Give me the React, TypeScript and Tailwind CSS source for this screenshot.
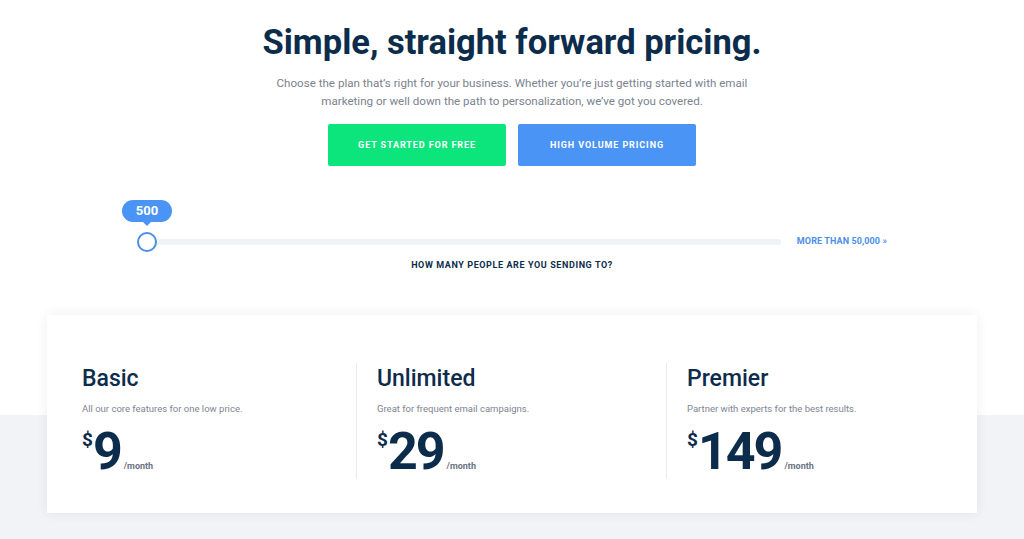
const plans = [
  { name: 'Basic', desc: 'All our core features for one low price.', price: '9' },
  { name: 'Unlimited', desc: 'Great for frequent email campaigns.', price: '29' },
  { name: 'Premier', desc: 'Partner with experts for the best results.', price: '149' },
];

const PlanColumn = ({ name, desc, price }: { name: string; desc: string; price: string }) => (
  <div className="flex h-full flex-col">
    <h3 className="mt-[4px] text-[23px] font-medium leading-none text-[#0c2c4c]">{name}</h3>
    <p className="mt-[13px] text-[9.5px] leading-[12px] text-[#7e8591]">{desc}</p>
    <div className="mt-[11px] flex items-baseline text-[#0c2c4c]">
      <span className="self-start pt-[4px] text-[19px] font-bold leading-none">$</span>
      <span className="text-[52px] font-bold leading-none tracking-[-2px]">{price}</span>
      <span className="ml-[3px] text-[9px] font-bold text-[#6b7380]">/month</span>
    </div>
  </div>
);

export default function App() {
  return (
    <div className="min-h-[539px] bg-white font-['Roboto',sans-serif]">
      <section className="flex flex-col items-center pt-[25px]">
        <h1 className="text-[34.5px] font-bold leading-none text-[#0c2c4c]">
          Simple, straight forward pricing.
        </h1>
        <p className="mt-[14px] w-[480px] text-center text-[11.6px] leading-[18px] text-[#7b828e]">
          Choose the plan that’s right for your business. Whether you’re just getting started with
          email marketing or well down the path to personalization, we’ve got you covered.
        </p>
        <div className="mt-[14px] flex gap-3">
          <button className="h-[42px] w-[178px] rounded-[2px] bg-[#0ce57c] pt-[2px] text-[9px] font-bold tracking-[0.9px] text-white">
            GET STARTED FOR FREE
          </button>
          <button className="h-[42px] w-[178px] rounded-[2px] bg-[#4a94f5] pt-[2px] text-[9px] font-bold tracking-[0.9px] text-white">
            HIGH VOLUME PRICING
          </button>
        </div>

        <div className="mt-[66px] flex w-[750px] items-center gap-4">
          <div className="relative flex h-[20px] flex-1 items-center">
            <div className="h-[6px] w-full rounded-full bg-[#f0f2f5]" />
            <div className="absolute left-0 top-0 h-[20px] w-[20px] rounded-full border-2 border-[#4a8ee6] bg-white">
              <div className="absolute bottom-[28px] left-1/2 flex h-[22px] w-[50px] -translate-x-1/2 items-center justify-center rounded-full bg-[#4a94f5] text-[13px] font-bold text-white">
                500
                <span className="absolute left-1/2 top-full h-0 w-0 -translate-x-1/2 border-x-[4px] border-t-[4px] border-x-transparent border-t-[#4a94f5]" />
              </div>
            </div>
          </div>
          <a className="text-[9px] font-bold leading-none tracking-[0.1px] text-[#4a8ee6]">MORE THAN 50,000 »</a>
        </div>
        <p className="mt-[7px] text-[9px] font-bold leading-[12px] tracking-[0.6px] text-[#0c2c4c]">
          HOW MANY PEOPLE ARE YOU SENDING TO?
        </p>
      </section>

      <section className="mt-[44px] bg-[linear-gradient(to_bottom,#ffffff_100px,#f1f3f6_100px)] px-[47px] pb-[26px]">
        <div className="flex h-[198px] bg-white px-[35px] pb-[34px] pt-[48px] shadow-[0_0_12px_rgba(15,35,60,0.07)]">
          <div className="w-[274px]">
            <PlanColumn {...plans[0]} />
          </div>
          <div className="w-[310px] border-l border-[#e9ebef] pl-[20px]">
            <PlanColumn {...plans[1]} />
          </div>
          <div className="flex-1 border-l border-[#e9ebef] pl-[20px]">
            <PlanColumn {...plans[2]} />
          </div>
        </div>
      </section>
    </div>
  );
}
